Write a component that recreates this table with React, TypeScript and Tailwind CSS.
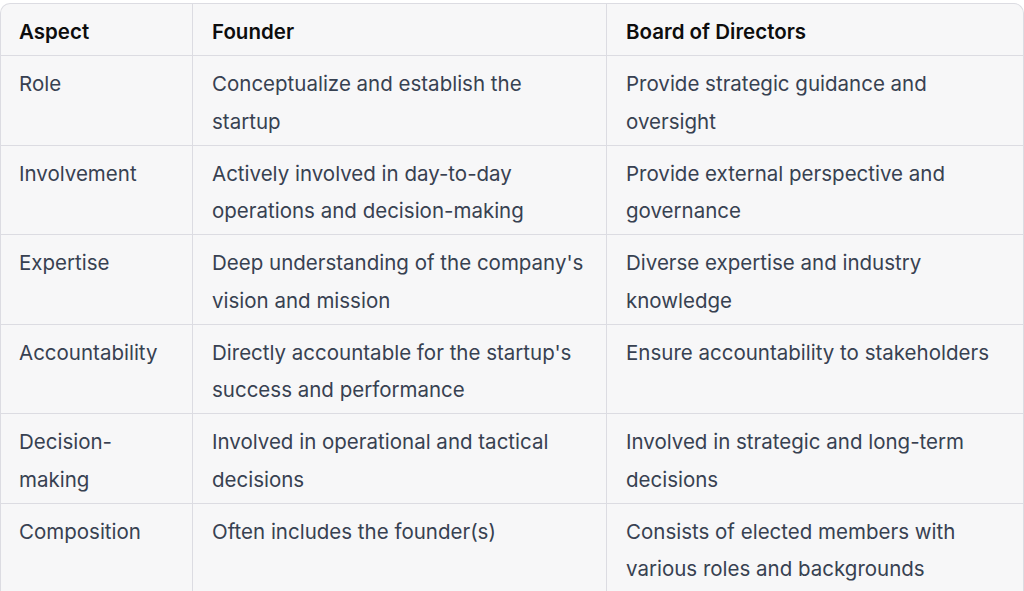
const rows: [string, string, string][] = [
  ["Role", "Conceptualize and establish the startup", "Provide strategic guidance and oversight"],
  [
    "Involvement",
    "Actively involved in day-to-day operations and decision-making",
    "Provide external perspective and governance",
  ],
  ["Expertise", "Deep understanding of the company's vision and mission", "Diverse expertise and industry knowledge"],
  [
    "Accountability",
    "Directly accountable for the startup's success and performance",
    "Ensure accountability to stakeholders",
  ],
  ["Decision-making", "Involved in operational and tactical decisions", "Involved in strategic and long-term decisions"],
  ["Composition", "Often includes the founder(s)", "Consists of elected members with various roles and backgrounds"],
];

const App = () => {
  return (
    <div className="h-[591px] w-[1024px] overflow-hidden bg-white pt-[3px] font-['Inter',sans-serif]">
      <table className="w-full table-fixed border-separate border-spacing-0 overflow-hidden rounded-t-[10px] border border-b-0 border-[#dcdce2] bg-[#f7f7f8] text-[20.5px] leading-[37.5px]">
        <colgroup>
          <col className="w-[191px]" />
          <col className="w-[414px]" />
          <col />
        </colgroup>
        <thead>
          <tr className="text-left text-[#0d0d0d]">
            <th className="px-[18px] pt-[9px] pb-[4.5px] font-semibold">Aspect</th>
            <th className="border-l border-[#dcdce2] px-[19px] pt-[9px] pb-[4.5px] font-semibold">Founder</th>
            <th className="border-l border-[#dcdce2] px-[19px] pt-[9px] pb-[4.5px] font-semibold">
              Board of Directors
            </th>
          </tr>
        </thead>
        <tbody className="text-[#374151]">
          {rows.map(([aspect, founder, board]) => (
            <tr key={aspect}>
              <td className="border-t border-[#dcdce2] px-[18px] pt-[9px] pb-[4.5px] align-top">{aspect}</td>
              <td className="border-t border-l border-[#dcdce2] pl-[19px] pr-[16px] pt-[9px] pb-[4.5px] align-top">
                {founder}
              </td>
              <td className="border-t border-l border-[#dcdce2] px-[19px] pt-[9px] pb-[4.5px] align-top">{board}</td>
            </tr>
          ))}
        </tbody>
      </table>
    </div>
  );
};

export default App;
